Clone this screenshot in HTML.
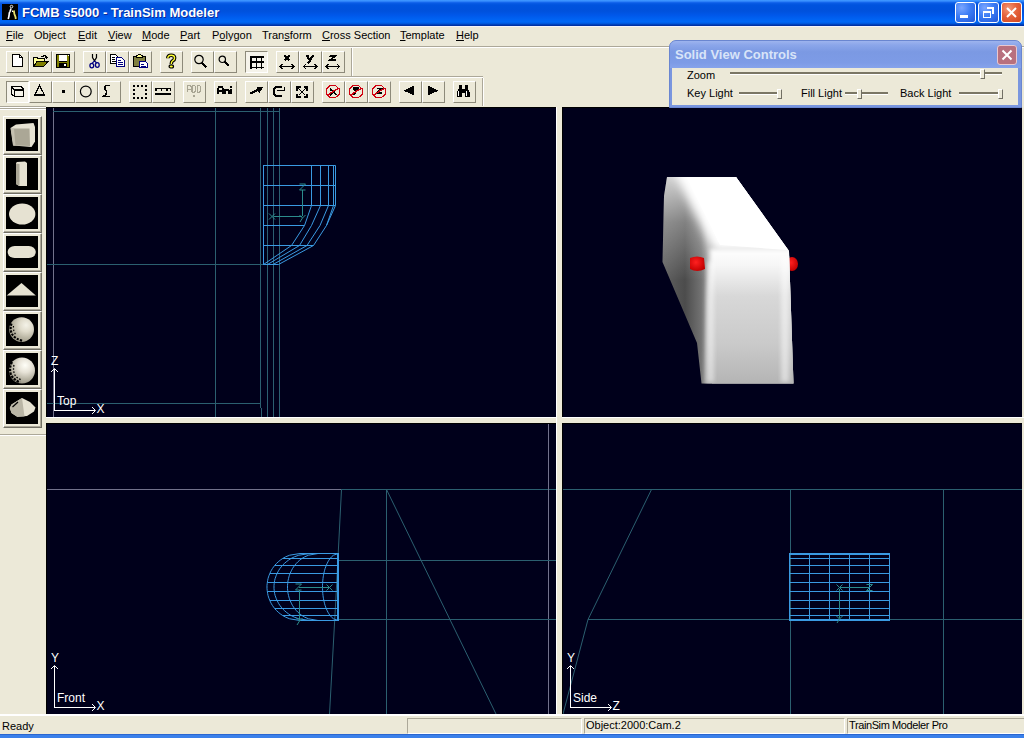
<!DOCTYPE html><html><head><meta charset="utf-8"><style>
*{margin:0;padding:0;box-sizing:border-box}
html,body{width:1024px;height:738px;overflow:hidden;background:#ECE9D8;font-family:"Liberation Sans",sans-serif;font-size:11px;color:#000;position:relative}
.a{position:absolute}
.t{white-space:nowrap}
.m{position:absolute;top:28px;line-height:14px;white-space:nowrap;font-size:11px}
.u{position:absolute;height:1px;background:#000}
.b{position:absolute;width:23px;height:22px;border-top:1px solid #fff;border-left:1px solid #fff;border-right:1px solid #8D8A7A;border-bottom:1px solid #8D8A7A}
.b:after{content:"";position:absolute;right:-1px;bottom:-1px;width:1px;height:1px}
.bp{position:absolute;width:23px;height:22px;border-top:1px solid #8D8A7A;border-left:1px solid #8D8A7A;border-right:1px solid #fff;border-bottom:1px solid #fff;background:#F5F3EA}
.ic{position:absolute;left:2px;top:2px;width:16px;height:16px;overflow:visible}
.vp{position:absolute;background:#00001B;overflow:hidden}
.vp svg{position:absolute;left:0;top:0}
.lbl{position:absolute;color:#fff;font-size:12px;white-space:nowrap;line-height:14px}
</style></head><body>
<div class="a" style="left:0;top:0;width:1024px;height:26px;background:linear-gradient(#3D95FF 0px,#3A92FF 1px,#1E70F2 2px,#0A5CE6 3px,#0053DE 5px,#0051DC 11px,#0057E9 15px,#0062F2 19px,#0068F6 22px,#0058DC 23.5px,#0038B0 25px,#002C98 26px)"></div>
<div class="a" style="left:0px;top:26px;width:1024px;height:1px;background:#F4F4FA;"></div>
<svg class="a" style="left:2px;top:4px" width="16" height="16" viewBox="0 0 16 16"><rect width="16" height="16" fill="#000"/><circle cx="9.5" cy="2.6" r="1.3" fill="none" stroke="#fff" stroke-width="0.9"/><path d="M9 4.5L8 7.5L7.3 9L7 12L6.2 15" fill="none" stroke="#fff" stroke-width="1.6"/><path d="M10.3 6.5L10.6 8" fill="none" stroke="#fff" stroke-width="1.2"/><path d="M11.8 6.5L12.4 10L13.5 13L13.8 15" fill="none" stroke="#E8E070" stroke-width="1.8"/></svg>
<div class="a t" style="left:22px;top:4px;font-size:13px;font-weight:bold;color:#fff;line-height:18px;text-shadow:1px 1px 0 #0A2A9C">FCMB s5000 - TrainSim Modeler</div>
<div class="a" style="left:955px;top:2px;width:21px;height:21px;border:1px solid #fff;border-radius:3px;background:radial-gradient(circle at 30% 25%,#7AA6FF 0%,#3D7DF5 45%,#2257D8 100%)"></div>
<div class="a" style="left:978px;top:2px;width:21px;height:21px;border:1px solid #fff;border-radius:3px;background:radial-gradient(circle at 30% 25%,#7AA6FF 0%,#3D7DF5 45%,#2257D8 100%)"></div>
<div class="a" style="left:1001px;top:2px;width:21px;height:21px;border:1px solid #fff;border-radius:3px;background:radial-gradient(circle at 35% 30%,#F39A7A 0%,#E5623C 45%,#D0451E 100%)"></div>
<div class="a" style="left:960px;top:15px;width:8px;height:3px;background:#fff;"></div>
<svg class="a" style="left:978px;top:2px" width="21" height="21" shape-rendering="crispEdges"><path d="M9 5h7v7h-2v-5h-5z" fill="#fff"/><rect x="5.5" y="9.5" width="7" height="6" fill="none" stroke="#fff" stroke-width="1"/><rect x="5" y="9" width="8" height="2" fill="#fff"/></svg>
<svg class="a" style="left:1001px;top:2px" width="21" height="21"><path d="M6 6L15 15M15 6L6 15" stroke="#fff" stroke-width="2"/></svg>
<div class="m" style="left:6px"><span style="text-decoration:underline;text-underline-offset:1px">F</span>ile</div>
<div class="m" style="left:34px">Object</div>
<div class="m" style="left:78px"><span style="text-decoration:underline;text-underline-offset:1px">E</span>dit</div>
<div class="m" style="left:108px"><span style="text-decoration:underline;text-underline-offset:1px">V</span>iew</div>
<div class="m" style="left:142px"><span style="text-decoration:underline;text-underline-offset:1px">M</span>ode</div>
<div class="m" style="left:180px"><span style="text-decoration:underline;text-underline-offset:1px">P</span>art</div>
<div class="m" style="left:212px">P<span style="text-decoration:underline;text-underline-offset:1px">o</span>lygon</div>
<div class="m" style="left:262px">Tran<span style="text-decoration:underline;text-underline-offset:1px">s</span>form</div>
<div class="m" style="left:322px"><span style="text-decoration:underline;text-underline-offset:1px">C</span>ross Section</div>
<div class="m" style="left:400px"><span style="text-decoration:underline;text-underline-offset:1px">T</span>emplate</div>
<div class="m" style="left:456px"><span style="text-decoration:underline;text-underline-offset:1px">H</span>elp</div>
<div class="a" style="left:0px;top:46px;width:1024px;height:1px;background:#ACA899;"></div>
<div class="a" style="left:0px;top:47px;width:1024px;height:1px;background:#fff;"></div>
<div class="a" style="left:351px;top:48px;width:1px;height:28px;background:#ACA899;"></div>
<div class="a" style="left:352px;top:48px;width:1px;height:28px;background:#fff;"></div>
<div class="a" style="left:0px;top:76px;width:483px;height:1px;background:#ACA899;"></div>
<div class="a" style="left:0px;top:77px;width:483px;height:1px;background:#fff;"></div>
<div class="a" style="left:482px;top:78px;width:1px;height:28px;background:#ACA899;"></div>
<div class="a" style="left:483px;top:78px;width:1px;height:28px;background:#fff;"></div>
<div class="a" style="left:0px;top:106px;width:46px;height:1px;background:#ACA899;"></div>
<div class="a" style="left:0px;top:107px;width:46px;height:1px;background:#fff;"></div>
<div class="a" style="left:0px;top:108px;width:46px;height:1px;background:#ACA899;"></div>
<div class="a" style="left:0px;top:109px;width:46px;height:1px;background:#fff;"></div>
<div class="b" style="left:6px;top:51px"><svg class="ic" viewBox="0 0 16 16" shape-rendering="crispEdges"><path d="M3.5 0.5H10.5L13.5 3.5V12.5H3.5Z" fill="#fff" stroke="#000" stroke-width="1" /><rect x="10" y="1" width="1" height="3" fill="#000"/><rect x="10" y="3" width="3" height="1" fill="#000"/></svg></div>
<div class="b" style="left:29px;top:51px"><svg class="ic" viewBox="0 0 16 16" shape-rendering="crispEdges"><path d="M1.5 12.5V3.5H5L6 4.5H12.5V7.8" fill="#FFFF99" stroke="#000" stroke-width="1.1" /><path d="M1.5 12.5L4.7 7.8H15.8L11.7 12.5Z" fill="#808000" stroke="#000" stroke-width="1.1" /><path d="M9.5 3.2Q12 0.5 14.8 2.8" fill="none" stroke="#000" stroke-width="1.2" /><path d="M12.8 2.8H16.8L14.8 5.2Z" fill="#000" /></svg></div>
<div class="b" style="left:52px;top:51px"><svg class="ic" viewBox="0 0 16 16" shape-rendering="crispEdges"><rect x="1" y="0" width="14" height="14" fill="#000"/><rect x="2" y="1" width="12" height="12" fill="#808000"/><rect x="4" y="1" width="8" height="6" fill="#fff"/><rect x="4" y="7" width="8" height="1" fill="#000"/><rect x="4" y="9" width="8" height="4" fill="#000"/><rect x="9" y="10" width="2" height="2" fill="#fff"/><rect x="13" y="1" width="1" height="1" fill="#fff"/><rect x="2" y="13" width="13" height="1" fill="#000"/></svg></div>
<div class="b" style="left:83px;top:51px"><svg class="ic" viewBox="0 0 16 16" shape-rendering="crispEdges"><g shape-rendering="geometricPrecision"><path d="M6.5 0V3.5L8.5 6.8L10.5 3.5V0" fill="none" stroke="#000" stroke-width="1.2" /><path d="M8.5 6.8L6.3 9.2M8.5 6.8L10.7 9" fill="none" stroke="#000080" stroke-width="1.2" /><ellipse cx="5.8" cy="11.6" rx="1.9" ry="2.3" fill="none" stroke="#000080" stroke-width="1.3"/><ellipse cx="11.3" cy="11" rx="1.9" ry="2.3" fill="none" stroke="#000080" stroke-width="1.3"/></g></svg></div>
<div class="b" style="left:106px;top:51px"><svg class="ic" viewBox="0 0 16 16" shape-rendering="crispEdges"><path d="M1.5 0.5H6.5L8.5 2.5V9.5H1.5Z" fill="#fff" stroke="#000" stroke-width="1" /><rect x="3" y="3" width="3" height="1" fill="#000"/><rect x="3" y="5" width="3" height="1" fill="#000"/><rect x="3" y="7" width="4" height="1" fill="#000"/><path d="M7.5 3.5H12.5L15.5 6.5V12.5H7.5Z" fill="#fff" stroke="#000080" stroke-width="1" /><rect x="9" y="6" width="3" height="1" fill="#000080"/><rect x="9" y="8" width="5" height="1" fill="#000080"/><rect x="9" y="10" width="5" height="1" fill="#000080"/></svg></div>
<div class="b" style="left:129px;top:51px"><svg class="ic" viewBox="0 0 16 16" shape-rendering="crispEdges"><path d="M1.5 2.5H13.5V12.5H1.5Z" fill="#808040" stroke="#000" stroke-width="1" /><path d="M5.5 1.5L6.5 0.5H8.5L9.5 1.5H10.5V3.5H4.5V1.5Z" fill="#FFFF90" stroke="#000" stroke-width="1" /><path d="M7.5 7.5H13.5L15.5 9.5V13.5H7.5Z" fill="#fff" stroke="#000080" stroke-width="1" /><rect x="9" y="10" width="3" height="1" fill="#000080"/><rect x="9" y="12" width="5" height="1" fill="#000080"/></svg></div>
<div class="b" style="left:160px;top:51px"><svg class="ic" viewBox="0 0 16 16" shape-rendering="crispEdges"><g shape-rendering="geometricPrecision"><path d="M4.8 4.2Q4.8 1.3 8.2 1.3Q11.6 1.3 11.6 4Q11.6 5.9 9.6 6.9Q8.3 7.6 8.3 10" fill="none" stroke="#000" stroke-width="3.6" /><path d="M4.8 4.2Q4.8 1.3 8.2 1.3Q11.6 1.3 11.6 4Q11.6 5.9 9.6 6.9Q8.3 7.6 8.3 10" fill="none" stroke="#FFFF30" stroke-width="1.4" /><ellipse cx="8.3" cy="12.4" rx="2.2" ry="1.6" fill="#FFFF30" stroke="#000" stroke-width="1.2"/></g></svg></div>
<div class="b" style="left:191px;top:51px"><svg class="ic" viewBox="0 0 16 16" shape-rendering="crispEdges"><circle shape-rendering="geometricPrecision" cx="5" cy="5.5" r="4.2" fill="none" stroke="#000" stroke-width="1.2"/><path d="M8 9L12.5 13.5" fill="none" stroke="#000" stroke-width="2.2" /></svg></div>
<div class="b" style="left:214px;top:51px"><svg class="ic" viewBox="0 0 16 16" shape-rendering="crispEdges"><circle shape-rendering="geometricPrecision" cx="5.3" cy="5.3" r="3.2" fill="none" stroke="#000" stroke-width="1.2"/><path d="M7.5 7.5L12 12" fill="none" stroke="#000" stroke-width="2" /></svg></div>
<div class="bp" style="left:245px;top:51px"><svg class="ic" viewBox="0 0 16 16" shape-rendering="crispEdges"><rect x="2" y="2.2" width="14" height="1.7" fill="#000"/><rect x="2" y="7.4" width="14" height="1.7" fill="#000"/><rect x="2" y="12.6" width="14" height="1.7" fill="#000"/><rect x="2.2" y="2" width="1.7" height="13" fill="#000"/><rect x="7.7" y="2" width="1.7" height="13" fill="#000"/><rect x="12.6" y="2" width="1.7" height="13" fill="#000"/></svg></div>
<div class="b" style="left:276px;top:51px"><svg class="ic" viewBox="0 0 16 16" shape-rendering="crispEdges"><path d="M5.5 1.5L10.5 6.5M10.5 1.5L5.5 6.5" fill="none" stroke="#000" stroke-width="2.2" /><path d="M1 12.5H15" fill="none" stroke="#000" stroke-width="1.2" /><path d="M3.5 10.2L1.3 12.5L3.5 14.8M12.5 10.2L14.7 12.5L12.5 14.8" fill="none" stroke="#000" stroke-width="1.2" /></svg></div>
<div class="b" style="left:299px;top:51px"><svg class="ic" viewBox="0 0 16 16" shape-rendering="crispEdges"><path d="M4.5 1.5L8 6.5M11 1.5L8 6.5L5.5 9.5" fill="none" stroke="#000" stroke-width="2.2" /><rect x="4" y="1" width="2.5" height="1.5" fill="#000"/><rect x="9.5" y="1" width="2.5" height="1.5" fill="#000"/><path d="M1.2 12.5H15" fill="none" stroke="#000" stroke-width="1.2" /><path d="M3.7 10.2L1.5 12.5L3.7 14.8M12.5 10.2L14.7 12.5L12.5 14.8" fill="none" stroke="#000" stroke-width="1.2" /></svg></div>
<div class="b" style="left:322px;top:51px"><svg class="ic" viewBox="0 0 16 16" shape-rendering="crispEdges"><path d="M5 2H10L5.2 6H10.5" fill="none" stroke="#000" stroke-width="1.8" /><rect x="4" y="1.5" width="1.3" height="1.5" fill="#000"/><path d="M1 12.5H14.7" fill="none" stroke="#000" stroke-width="1.2" /><path d="M3.5 10.2L1.3 12.5L3.5 14.8M12.2 10.2L14.399999999999999 12.5L12.2 14.8" fill="none" stroke="#000" stroke-width="1.2" /></svg></div>
<div class="bp" style="left:6px;top:81px"><svg class="ic" viewBox="0 0 16 16" shape-rendering="crispEdges"><path d="M2.5 2.5H11.8L14.5 5.3M2.5 2.5V9.8L5.3 12.3M2.5 2.5L5.3 5.5" fill="none" stroke="#000" stroke-width="1.3" /><path d="M5.5 5.8H14.5V12.5H5.5Z" fill="none" stroke="#000" stroke-width="1.3" /><rect x="5" y="5" width="10" height="1.5" fill="#000"/></svg></div>
<div class="b" style="left:29px;top:81px"><svg class="ic" viewBox="0 0 16 16" shape-rendering="crispEdges"><path d="M2.8 11L7.5 1.5L12.5 11Z" fill="none" stroke="#000" stroke-width="1.2" /><rect x="2" y="10.6" width="11" height="1.4" fill="#000"/></svg></div>
<div class="b" style="left:52px;top:81px"><svg class="ic" viewBox="0 0 16 16" shape-rendering="crispEdges"><rect x="7" y="6" width="3" height="3" fill="#000"/></svg></div>
<div class="b" style="left:75px;top:81px"><svg class="ic" viewBox="0 0 16 16" shape-rendering="crispEdges"><circle cx="7.8" cy="7.5" r="5.4" fill="none" stroke="#000" stroke-width="1.2" shape-rendering="geometricPrecision"/></svg></div>
<div class="b" style="left:98px;top:81px"><svg class="ic" viewBox="0 0 16 16" shape-rendering="crispEdges"><path d="M8.7 1.5H5.5Q3.5 2.5 3.8 4.5Q4.5 6.5 5.8 8Q5.5 10.5 2.5 12.5H8.7" fill="none" stroke="#000" stroke-width="1.5" /></svg></div>
<div class="b" style="left:129px;top:81px"><svg class="ic" viewBox="0 0 16 16" shape-rendering="crispEdges"><rect x="1" y="1" width="2" height="2" fill="#000"/><rect x="5" y="1" width="2" height="2" fill="#000"/><rect x="9" y="1" width="2" height="2" fill="#000"/><rect x="13" y="1" width="2" height="2" fill="#000"/><rect x="1" y="5" width="2" height="2" fill="#000"/><rect x="13" y="5" width="2" height="2" fill="#000"/><rect x="1" y="9" width="2" height="2" fill="#000"/><rect x="13" y="9" width="2" height="2" fill="#000"/><rect x="1" y="13" width="2" height="2" fill="#000"/><rect x="5" y="13" width="2" height="2" fill="#000"/><rect x="9" y="13" width="2" height="2" fill="#000"/><rect x="13" y="13" width="2" height="2" fill="#000"/></svg></div>
<div class="b" style="left:152px;top:81px"><svg class="ic" viewBox="0 0 16 16" shape-rendering="crispEdges"><rect x="0" y="4" width="16" height="1.4" fill="#000"/><rect x="0" y="5.4" width="1.5" height="1.4" fill="#000"/><rect x="5.6" y="5.4" width="1.4" height="1.2" fill="#000"/><rect x="11.2" y="5.4" width="1.4" height="1.2" fill="#000"/><rect x="14.6" y="5.4" width="1.4" height="1.4" fill="#000"/><rect x="0" y="9.2" width="16" height="1.3" fill="#000"/></svg></div>
<div class="b" style="left:183px;top:81px"><svg class="ic" viewBox="0 0 16 16" shape-rendering="crispEdges"><path d="M1 8V2.5L2 1.5H4L5 2.5V8M1 5H5M6 1.5H8.5L9.5 2.5V7L8.5 8H6ZM11 1.5H13.5L14.5 2.5V7L13.5 8H11Z" fill="none" stroke="#A8A593" stroke-width="1" /><rect x="7" y="11" width="2" height="2" fill="#A8A593"/></svg></div>
<div class="b" style="left:214px;top:81px"><svg class="ic" viewBox="0 0 16 16" shape-rendering="crispEdges"><path d="M1 10V4.5L2.5 2.8H4.5L6 4.5V10M1 7H6" fill="none" stroke="#000" stroke-width="2" /><path d="M8 10V5.5H10.5L11.5 6.5V10" fill="none" stroke="#000" stroke-width="2" /><rect x="13" y="5" width="2" height="5" fill="#000"/><rect x="13" y="2.2" width="2" height="2" fill="#000"/></svg></div>
<div class="b" style="left:245px;top:81px"><svg class="ic" viewBox="0 0 16 16" shape-rendering="crispEdges"><path d="M2.5 9.5L12.5 4.5" fill="none" stroke="#000" stroke-width="2.2" /><path d="M8.5 4H13.5L10.8 8.5" fill="none" stroke="#000" stroke-width="1.8" /></svg></div>
<div class="b" style="left:268px;top:81px"><svg class="ic" viewBox="0 0 16 16" shape-rendering="crispEdges"><path d="M11 2.8H5.5L3 5.3V10L5.5 12H11" fill="none" stroke="#000" stroke-width="2.2" /><path d="M6 6.5H13.5V3" fill="none" stroke="#000" stroke-width="1.6" /></svg></div>
<div class="b" style="left:291px;top:81px"><svg class="ic" viewBox="0 0 16 16" shape-rendering="crispEdges"><path d="M4.5 4.5L11.5 11.5M11.5 4.5L4.5 11.5" fill="none" stroke="#000" stroke-width="1.3" /><path d="M3 6.5V3H6.5M9.5 3H13V6.5M13 9.5V13H9.5M6.5 13H3V9.5" fill="none" stroke="#000" stroke-width="1.6" /></svg></div>
<div class="b" style="left:322px;top:81px"><svg class="ic" viewBox="0 0 16 16" shape-rendering="crispEdges"><path d="M5 1.5H10.5L14.5 5.3V10L10.5 13.5H5L1.5 10V5.3Z" fill="none" stroke="#D00010" stroke-width="1.2"/><path d="M5 5L11.5 11M11.5 5L5 11" fill="none" stroke="#000" stroke-width="1.6" /><path d="M2.8 10.8L13.5 4.2" fill="none" stroke="#D00010" stroke-width="1.4" /></svg></div>
<div class="b" style="left:345px;top:81px"><svg class="ic" viewBox="0 0 16 16" shape-rendering="crispEdges"><path d="M5 1.5H10.5L14.5 5.3V10L10.5 13.5H5L1.5 10V5.3Z" fill="none" stroke="#D00010" stroke-width="1.2"/><path d="M5 3.5L8 7M11 3.5L8 7L6 11" fill="none" stroke="#000" stroke-width="2" /><rect x="6" y="2.5" width="4.5" height="2" fill="#000"/><path d="M2.8 10.8L13.5 4.2" fill="none" stroke="#D00010" stroke-width="1.4" /></svg></div>
<div class="b" style="left:368px;top:81px"><svg class="ic" viewBox="0 0 16 16" shape-rendering="crispEdges"><path d="M5 1.5H10.5L14.5 5.3V10L10.5 13.5H5L1.5 10V5.3Z" fill="none" stroke="#D00010" stroke-width="1.2"/><path d="M6 4.5H10.5L6 9.2H10.8" fill="none" stroke="#000" stroke-width="1.7" /><path d="M2.8 10.8L13.5 4.2" fill="none" stroke="#D00010" stroke-width="1.4" /></svg></div>
<div class="b" style="left:399px;top:81px"><svg class="ic" viewBox="0 0 16 16" shape-rendering="crispEdges"><path d="M1.8 6.7L12 1.7V11.6Z" fill="#000" /></svg></div>
<div class="b" style="left:422px;top:81px"><svg class="ic" viewBox="0 0 16 16" shape-rendering="crispEdges"><path d="M3 1.7L13.2 6.7L3 11.6Z" fill="#000" /></svg></div>
<div class="b" style="left:453px;top:81px"><svg class="ic" viewBox="0 0 16 16" shape-rendering="crispEdges"><path d="M2.5 1H5.5V5H8.5V1H11.5V4.5L13.8 8V12.8H9V9H5.5V12.8H1V8L2.5 4.5Z" fill="#000" /><rect x="2.3" y="7" width="1" height="4.5" fill="#fff"/><rect x="9.6" y="7" width="1" height="4.5" fill="#fff"/><rect x="5.5" y="5" width="3" height="1.5" fill="#000"/></svg></div>
<div class="vp" style="left:46px;top:107px;width:510px;height:310px"><svg width="510" height="310" viewBox="46 107 510 310"><line x1="53.5" y1="107" x2="53.5" y2="417" stroke="#72728C" stroke-width="1"/><line x1="53" y1="111.5" x2="280" y2="111.5" stroke="#2B5F70" stroke-width="1"/><line x1="215.5" y1="107" x2="215.5" y2="417" stroke="#2B5F70" stroke-width="1"/><line x1="267.5" y1="107" x2="267.5" y2="417" stroke="#2B5F70" stroke-width="1"/><line x1="273.5" y1="107" x2="273.5" y2="417" stroke="#2B5F70" stroke-width="1"/><line x1="279.5" y1="107" x2="279.5" y2="417" stroke="#2B5F70" stroke-width="1"/><line x1="260.5" y1="107" x2="260.5" y2="408" stroke="#2B5F70" stroke-width="1"/><line x1="261.5" y1="408" x2="261.5" y2="417" stroke="#2B5F70" stroke-width="1"/><line x1="46" y1="264.5" x2="263" y2="264.5" stroke="#2B5F70" stroke-width="1"/><line x1="46" y1="403.5" x2="260" y2="403.5" stroke="#2B5F70" stroke-width="1"/><line x1="263.5" y1="165.5" x2="335.5" y2="165.5" stroke="#3A9AE2" stroke-width="1"/><line x1="263.5" y1="185.5" x2="335.5" y2="185.5" stroke="#3A9AE2" stroke-width="1"/><line x1="263.5" y1="205.5" x2="335.5" y2="205.5" stroke="#3A9AE2" stroke-width="1"/><line x1="263.5" y1="165" x2="263.5" y2="265" stroke="#3A9AE2" stroke-width="1"/><line x1="311.5" y1="165.5" x2="311.5" y2="205.5" stroke="#3A9AE2" stroke-width="1"/><line x1="320.5" y1="165.5" x2="320.5" y2="205.5" stroke="#3A9AE2" stroke-width="1"/><line x1="328.5" y1="165.5" x2="328.5" y2="205.5" stroke="#3A9AE2" stroke-width="1"/><line x1="333.5" y1="165.5" x2="333.5" y2="205.5" stroke="#3A9AE2" stroke-width="1"/><line x1="335.5" y1="165.5" x2="335.5" y2="205.5" stroke="#3A9AE2" stroke-width="1"/><polyline points="311.5,205.5 304.5,225.5 291.5,245.5 263.5,264.5" fill="none" stroke="#3A9AE2" stroke-width="1"/><polyline points="320.5,205.5 311.5,225.5 299.5,245.5 267.5,264.5" fill="none" stroke="#3A9AE2" stroke-width="1"/><polyline points="328.5,205.5 320,225.5 307,245.5 273,264.5" fill="none" stroke="#3A9AE2" stroke-width="1"/><polyline points="335.5,205.5 326.5,225.5 313.5,245.5 278.5,264.5" fill="none" stroke="#3A9AE2" stroke-width="1"/><line x1="263.5" y1="225.5" x2="304.5" y2="225.5" stroke="#3A9AE2" stroke-width="1"/><line x1="263.5" y1="245.5" x2="313.5" y2="245.5" stroke="#3A9AE2" stroke-width="1"/><line x1="263.5" y1="264.5" x2="278.5" y2="264.5" stroke="#3A9AE2" stroke-width="1"/><line x1="333.5" y1="205.5" x2="326.5" y2="225.5" stroke="#3A9AE2" stroke-width="1"/><line x1="302.5" y1="190" x2="302.5" y2="216" stroke="#2C8C8C" stroke-width="1"/><line x1="274" y1="216.5" x2="302" y2="216.5" stroke="#2C8C8C" stroke-width="1"/><path d="M299.5 184H305.5L299.5 190H305.5" fill="none" stroke="#2C8C8C" stroke-width="1"/><path d="M269 213.5L275 219.5M275 213.5L269 219.5" fill="none" stroke="#2C8C8C" stroke-width="1"/><path d="M299.5 215L302.5 218L305.5 215M302.5 218L300.0 222" fill="none" stroke="#2C8C8C" stroke-width="1"/><line x1="54.5" y1="369" x2="54.5" y2="411" stroke="#fff" stroke-width="1"/><line x1="54" y1="410.5" x2="95" y2="410.5" stroke="#fff" stroke-width="1"/><path d="M51 372L54.5 368.5L58 372" fill="none" stroke="#fff" stroke-width="1"/><path d="M92 407L95.5 410.5L92 414" fill="none" stroke="#fff" stroke-width="1"/><text x="51" y="365" font-family="Liberation Sans" font-size="12" fill="#fff">Z</text><text x="57" y="405" font-family="Liberation Sans" font-size="12" fill="#fff">Top</text><text x="96.5" y="413" font-family="Liberation Sans" font-size="12" fill="#fff">X</text></svg></div>
<div class="vp" style="left:562px;top:107px;width:460px;height:310px"><svg width="460" height="310" viewBox="562 107 460 310"><defs>
<clipPath id="sil"><path d="M667 177L736 177L789 251L793.5 383.5L701.5 383.5L697 343L662.5 262L664 196Z"/></clipPath>
<clipPath id="frt"><path d="M704 249L800 249L800 390L700 390Z"/></clipPath>
<filter id="bl" x="-30%" y="-30%" width="160%" height="160%"><feGaussianBlur stdDeviation="3"/></filter>
<filter id="bl1" x="-30%" y="-30%" width="160%" height="160%"><feGaussianBlur stdDeviation="2"/></filter>
<filter id="bl2" x="-30%" y="-30%" width="160%" height="160%"><feGaussianBlur stdDeviation="5"/></filter>
<linearGradient id="gf" x1="0" y1="249" x2="0" y2="384" gradientUnits="userSpaceOnUse"><stop offset="0" stop-color="#FFFFFF"/><stop offset="0.12" stop-color="#F6F6F6"/><stop offset="0.35" stop-color="#D8D8D8"/><stop offset="0.7" stop-color="#CACACA"/><stop offset="1" stop-color="#B4B4B4"/></linearGradient>
<linearGradient id="gl" x1="662" y1="0" x2="708" y2="0" gradientUnits="userSpaceOnUse"><stop offset="0" stop-color="#626262"/><stop offset="0.5" stop-color="#4C4C4C"/><stop offset="0.85" stop-color="#727272"/><stop offset="1" stop-color="#A0A0A0"/></linearGradient>
<linearGradient id="glv" x1="0" y1="175" x2="0" y2="280" gradientUnits="userSpaceOnUse"><stop offset="0" stop-color="#fff" stop-opacity="0.75"/><stop offset="0.45" stop-color="#fff" stop-opacity="0.3"/><stop offset="1" stop-color="#fff" stop-opacity="0"/></linearGradient>
<radialGradient id="rd" cx="0.4" cy="0.4" r="0.65"><stop offset="0" stop-color="#FF2020"/><stop offset="1" stop-color="#C00000"/></radialGradient>
</defs><ellipse cx="792" cy="264" rx="6" ry="7" fill="url(#rd)"/><g clip-path="url(#sil)"><rect x="650" y="170" width="160" height="220" fill="url(#gl)"/><rect x="650" y="170" width="160" height="220" fill="url(#glv)"/><path d="M672 168L750 168L805 251L714 251Z" fill="#FFFFFF" filter="url(#bl2)"/><path d="M684 172L745 172L800 251L720 245Z" fill="#FFFFFF"/><path d="M710 249L800 249L800 390L705 390L707 300Z" fill="url(#gf)" filter="url(#bl1)"/><path d="M714 256L800 256L800 390L712 390L712 300Z" fill="url(#gf)"/><rect x="707" y="262" width="7" height="120" fill="#FFFFFF" filter="url(#bl1)" opacity="0.45"/><rect x="781" y="256" width="8" height="126" fill="#FFFFFF" filter="url(#bl1)" opacity="0.5"/></g><path d="M690 258Q697 255 704 258L705 269Q697 273 690 269Z" fill="url(#rd)"/></svg></div>
<div class="vp" style="left:46px;top:423px;width:510px;height:291px"><svg width="510" height="291" viewBox="46 423 510 291"><line x1="46" y1="489.5" x2="341" y2="489.5" stroke="#72728C" stroke-width="1"/><line x1="341" y1="489.5" x2="556" y2="489.5" stroke="#2B5F70" stroke-width="1"/><line x1="548.5" y1="423" x2="548.5" y2="714" stroke="#72728C" stroke-width="1"/><path d="M341.5 489.5Q336 600 329.5 714" fill="none" stroke="#2B5F70" stroke-width="1"/><line x1="386.5" y1="489" x2="386.5" y2="714" stroke="#2B5F70" stroke-width="1"/><line x1="386.5" y1="489.5" x2="496" y2="714" stroke="#2B5F70" stroke-width="1"/><line x1="338" y1="560.5" x2="556" y2="560.5" stroke="#2B5F70" stroke-width="1"/><line x1="338" y1="619.5" x2="556" y2="619.5" stroke="#2B5F70" stroke-width="1"/><line x1="300.0" y1="553.5" x2="338.5" y2="553.5" stroke="#3A9AE2" stroke-width="1"/><line x1="282.65597144970906" y1="558.5" x2="338.5" y2="558.5" stroke="#3A9AE2" stroke-width="1"/><line x1="274.69297462113735" y1="565.5" x2="338.5" y2="565.5" stroke="#3A9AE2" stroke-width="1"/><line x1="269.79818384161524" y1="573.5" x2="338.5" y2="573.5" stroke="#3A9AE2" stroke-width="1"/><line x1="267.2990830925953" y1="582.5" x2="338.5" y2="582.5" stroke="#3A9AE2" stroke-width="1"/><line x1="267.2990830925953" y1="591.5" x2="338.5" y2="591.5" stroke="#3A9AE2" stroke-width="1"/><line x1="269.79818384161524" y1="600.5" x2="338.5" y2="600.5" stroke="#3A9AE2" stroke-width="1"/><line x1="274.69297462113735" y1="608.5" x2="338.5" y2="608.5" stroke="#3A9AE2" stroke-width="1"/><line x1="282.65597144970906" y1="615.5" x2="338.5" y2="615.5" stroke="#3A9AE2" stroke-width="1"/><line x1="300.0" y1="620.5" x2="338.5" y2="620.5" stroke="#3A9AE2" stroke-width="1"/><line x1="338.5" y1="553" x2="338.5" y2="621" stroke="#3A9AE2" stroke-width="1"/><line x1="337.5" y1="553" x2="337.5" y2="621" stroke="#3A9AE2" stroke-width="1"/><polyline points="300.0,553.5 289.7,555.175 285.6,556.85 282.6,558.525 280.2,560.2 278.2,561.875 276.4,563.55 274.9,565.225 273.6,566.9 272.4,568.575 271.4,570.25 270.5,571.925 269.8,573.6 269.1,575.275 268.5,576.95 268.0,578.625 267.7,580.3 267.4,581.975 267.2,583.65 267.0,585.325 267.0,587.0 267.0,588.675 267.2,590.35 267.4,592.025 267.7,593.7 268.0,595.375 268.5,597.05 269.1,598.725 269.8,600.4 270.5,602.075 271.4,603.75 272.4,605.425 273.6,607.1 274.9,608.775 276.4,610.45 278.2,612.125 280.2,613.8 282.6,615.475 285.6,617.15 289.7,618.825 300.0,620.5" fill="none" stroke="#3A9AE2" stroke-width="1"/><polyline points="310.0,553.5 298.8,555.175 294.3,556.85 291.0,558.525 288.4,560.2 286.2,561.875 284.3,563.55 282.6,565.225 281.2,566.9 279.9,568.575 278.8,570.25 277.9,571.925 277.0,573.6 276.3,575.275 275.7,576.95 275.1,578.625 274.7,580.3 274.4,581.975 274.2,583.65 274.0,585.325 274.0,587.0 274.0,588.675 274.2,590.35 274.4,592.025 274.7,593.7 275.1,595.375 275.7,597.05 276.3,598.725 277.0,600.4 277.9,602.075 278.8,603.75 279.9,605.425 281.2,607.1 282.6,608.775 284.3,610.45 286.2,612.125 288.4,613.8 291.0,615.475 294.3,617.15 298.8,618.825 310.0,620.5" fill="none" stroke="#3A9AE2" stroke-width="1"/><polyline points="318.0,553.5 308.5,555.175 304.7,556.85 301.9,558.525 299.7,560.2 297.8,561.875 296.2,563.55 294.8,565.225 293.6,566.9 292.5,568.575 291.6,570.25 290.8,571.925 290.0,573.6 289.4,575.275 288.9,576.95 288.5,578.625 288.1,580.3 287.8,581.975 287.7,583.65 287.5,585.325 287.5,587.0 287.5,588.675 287.7,590.35 287.8,592.025 288.1,593.7 288.5,595.375 288.9,597.05 289.4,598.725 290.0,600.4 290.8,602.075 291.6,603.75 292.5,605.425 293.6,607.1 294.8,608.775 296.2,610.45 297.8,612.125 299.7,613.8 301.9,615.475 304.7,617.15 308.5,618.825 318.0,620.5" fill="none" stroke="#3A9AE2" stroke-width="1"/><polyline points="338.5,553.5 333.5,555.175 331.5,556.85 330.1,558.525 328.9,560.2 327.9,561.875 327.1,563.55 326.3,565.225 325.7,566.9 325.1,568.575 324.6,570.25 324.2,571.925 323.8,573.6 323.5,575.275 323.2,576.95 323.0,578.625 322.8,580.3 322.7,581.975 322.6,583.65 322.5,585.325 322.5,587.0 322.5,588.675 322.6,590.35 322.7,592.025 322.8,593.7 323.0,595.375 323.2,597.05 323.5,598.725 323.8,600.4 324.2,602.075 324.6,603.75 325.1,605.425 325.7,607.1 326.3,608.775 327.1,610.45 327.9,612.125 328.9,613.8 330.1,615.475 331.5,617.15 333.5,618.825 338.5,620.5" fill="none" stroke="#3A9AE2" stroke-width="1"/><line x1="299" y1="587.5" x2="329" y2="587.5" stroke="#2C8C8C" stroke-width="1"/><line x1="299.5" y1="590" x2="299.5" y2="621" stroke="#2C8C8C" stroke-width="1"/><path d="M295.5 584H301.5L295.5 590H301.5" fill="none" stroke="#2C8C8C" stroke-width="1"/><path d="M326.5 584.5L332.5 590.5M332.5 584.5L326.5 590.5" fill="none" stroke="#2C8C8C" stroke-width="1"/><path d="M296.5 618L299.5 621L302.5 618M299.5 621L297.0 625" fill="none" stroke="#2C8C8C" stroke-width="1"/><line x1="54.5" y1="666" x2="54.5" y2="708" stroke="#fff" stroke-width="1"/><line x1="54" y1="707.5" x2="95" y2="707.5" stroke="#fff" stroke-width="1"/><path d="M51 669L54.5 665.5L58 669" fill="none" stroke="#fff" stroke-width="1"/><path d="M92 704L95.5 707.5L92 711" fill="none" stroke="#fff" stroke-width="1"/><text x="51" y="662" font-family="Liberation Sans" font-size="12" fill="#fff">Y</text><text x="57" y="702" font-family="Liberation Sans" font-size="12" fill="#fff">Front</text><text x="96.5" y="710" font-family="Liberation Sans" font-size="12" fill="#fff">X</text></svg></div>
<div class="vp" style="left:562px;top:423px;width:460px;height:291px"><svg width="460" height="291" viewBox="562 423 460 291"><line x1="562" y1="489.5" x2="1022" y2="489.5" stroke="#2B5F70" stroke-width="1"/><line x1="651.5" y1="489.5" x2="588" y2="619.5" stroke="#2B5F70" stroke-width="1"/><line x1="588" y1="619.5" x2="563" y2="714" stroke="#2B5F70" stroke-width="1"/><line x1="588" y1="619.5" x2="1022" y2="619.5" stroke="#2B5F70" stroke-width="1"/><line x1="790.5" y1="489" x2="790.5" y2="714" stroke="#2B5F70" stroke-width="1"/><line x1="943.5" y1="489" x2="943.5" y2="714" stroke="#2B5F70" stroke-width="1"/><line x1="789.5" y1="553.5" x2="889.5" y2="553.5" stroke="#3A9AE2" stroke-width="1"/><line x1="789.5" y1="558.5" x2="889.5" y2="558.5" stroke="#3A9AE2" stroke-width="1"/><line x1="789.5" y1="565.5" x2="889.5" y2="565.5" stroke="#3A9AE2" stroke-width="1"/><line x1="789.5" y1="573.5" x2="889.5" y2="573.5" stroke="#3A9AE2" stroke-width="1"/><line x1="789.5" y1="582.5" x2="889.5" y2="582.5" stroke="#3A9AE2" stroke-width="1"/><line x1="789.5" y1="591.5" x2="889.5" y2="591.5" stroke="#3A9AE2" stroke-width="1"/><line x1="789.5" y1="600.5" x2="889.5" y2="600.5" stroke="#3A9AE2" stroke-width="1"/><line x1="789.5" y1="608.5" x2="889.5" y2="608.5" stroke="#3A9AE2" stroke-width="1"/><line x1="789.5" y1="615.5" x2="889.5" y2="615.5" stroke="#3A9AE2" stroke-width="1"/><line x1="789.5" y1="619.5" x2="889.5" y2="619.5" stroke="#3A9AE2" stroke-width="1"/><line x1="789.5" y1="554.5" x2="889.5" y2="554.5" stroke="#3A9AE2" stroke-width="1"/><line x1="789.5" y1="620.5" x2="889.5" y2="620.5" stroke="#3A9AE2" stroke-width="1"/><line x1="789.5" y1="553" x2="789.5" y2="621" stroke="#3A9AE2" stroke-width="1"/><line x1="809.5" y1="553" x2="809.5" y2="621" stroke="#3A9AE2" stroke-width="1"/><line x1="829.5" y1="553" x2="829.5" y2="621" stroke="#3A9AE2" stroke-width="1"/><line x1="849.5" y1="553" x2="849.5" y2="621" stroke="#3A9AE2" stroke-width="1"/><line x1="869.5" y1="553" x2="869.5" y2="621" stroke="#3A9AE2" stroke-width="1"/><line x1="889.5" y1="553" x2="889.5" y2="621" stroke="#3A9AE2" stroke-width="1"/><line x1="840" y1="587.5" x2="869" y2="587.5" stroke="#2C8C8C" stroke-width="1"/><line x1="839.5" y1="589" x2="839.5" y2="618" stroke="#2C8C8C" stroke-width="1"/><path d="M836.5 584.5L842.5 590.5M842.5 584.5L836.5 590.5" fill="none" stroke="#2C8C8C" stroke-width="1"/><path d="M866.5 584.5H872.5L866.5 590.5H872.5" fill="none" stroke="#2C8C8C" stroke-width="1"/><path d="M836.5 616L839.5 619L842.5 616M839.5 619L837.0 623" fill="none" stroke="#2C8C8C" stroke-width="1"/><line x1="570.5" y1="666" x2="570.5" y2="708" stroke="#fff" stroke-width="1"/><line x1="570" y1="707.5" x2="611" y2="707.5" stroke="#fff" stroke-width="1"/><path d="M567 669L570.5 665.5L574 669" fill="none" stroke="#fff" stroke-width="1"/><path d="M608 704L611.5 707.5L608 711" fill="none" stroke="#fff" stroke-width="1"/><text x="567" y="662" font-family="Liberation Sans" font-size="12" fill="#fff">Y</text><text x="573" y="702" font-family="Liberation Sans" font-size="12" fill="#fff">Side</text><text x="612.5" y="710" font-family="Liberation Sans" font-size="12" fill="#fff">Z</text></svg></div>
<div class="a" style="left:46px;top:417px;width:510px;height:1px;background:#fff;"></div>
<div class="a" style="left:562px;top:417px;width:462px;height:1px;background:#fff;"></div>
<div class="a" style="left:556px;top:107px;width:1px;height:607px;background:#fff;"></div>
<div class="a" style="left:46px;top:107px;width:510px;height:1px;background:#000;"></div>
<div class="a" style="left:46px;top:107px;width:1px;height:310px;background:#000;"></div>
<div class="a" style="left:562px;top:107px;width:460px;height:1px;background:#000;"></div>
<div class="a" style="left:562px;top:107px;width:1px;height:310px;background:#000;"></div>
<div class="a" style="left:46px;top:423px;width:510px;height:1px;background:#000;"></div>
<div class="a" style="left:46px;top:423px;width:1px;height:291px;background:#000;"></div>
<div class="a" style="left:562px;top:423px;width:460px;height:1px;background:#000;"></div>
<div class="a" style="left:562px;top:423px;width:1px;height:291px;background:#000;"></div>
<div class="a" style="left:0px;top:434px;width:46px;height:1px;background:#ACA899;"></div>
<div class="a" style="left:0px;top:435px;width:46px;height:1px;background:#fff;"></div>
<div class="a" style="left:3px;top:116px;width:39px;height:39px;border-top:1px solid #fff;border-left:1px solid #fff;border-right:1px solid #716F64;border-bottom:1px solid #716F64;box-shadow:inset -1px -1px 0 #ACA899"></div>
<div class="a" style="left:6px;top:119px;width:32px;height:32px;background:#000;"></div>
<div class="a" style="left:3px;top:155px;width:39px;height:39px;border-top:1px solid #fff;border-left:1px solid #fff;border-right:1px solid #716F64;border-bottom:1px solid #716F64;box-shadow:inset -1px -1px 0 #ACA899"></div>
<div class="a" style="left:6px;top:158px;width:32px;height:32px;background:#000;"></div>
<div class="a" style="left:3px;top:194px;width:39px;height:39px;border-top:1px solid #fff;border-left:1px solid #fff;border-right:1px solid #716F64;border-bottom:1px solid #716F64;box-shadow:inset -1px -1px 0 #ACA899"></div>
<div class="a" style="left:6px;top:197px;width:32px;height:32px;background:#000;"></div>
<div class="a" style="left:3px;top:233px;width:39px;height:39px;border-top:1px solid #fff;border-left:1px solid #fff;border-right:1px solid #716F64;border-bottom:1px solid #716F64;box-shadow:inset -1px -1px 0 #ACA899"></div>
<div class="a" style="left:6px;top:236px;width:32px;height:32px;background:#000;"></div>
<div class="a" style="left:3px;top:272px;width:39px;height:39px;border-top:1px solid #fff;border-left:1px solid #fff;border-right:1px solid #716F64;border-bottom:1px solid #716F64;box-shadow:inset -1px -1px 0 #ACA899"></div>
<div class="a" style="left:6px;top:275px;width:32px;height:32px;background:#000;"></div>
<div class="a" style="left:3px;top:311px;width:39px;height:39px;border-top:1px solid #fff;border-left:1px solid #fff;border-right:1px solid #716F64;border-bottom:1px solid #716F64;box-shadow:inset -1px -1px 0 #ACA899"></div>
<div class="a" style="left:6px;top:314px;width:32px;height:32px;background:#000;"></div>
<div class="a" style="left:3px;top:350px;width:39px;height:39px;border-top:1px solid #fff;border-left:1px solid #fff;border-right:1px solid #716F64;border-bottom:1px solid #716F64;box-shadow:inset -1px -1px 0 #ACA899"></div>
<div class="a" style="left:6px;top:353px;width:32px;height:32px;background:#000;"></div>
<div class="a" style="left:3px;top:389px;width:39px;height:39px;border-top:1px solid #fff;border-left:1px solid #fff;border-right:1px solid #716F64;border-bottom:1px solid #716F64;box-shadow:inset -1px -1px 0 #ACA899"></div>
<div class="a" style="left:6px;top:392px;width:32px;height:32px;background:#000;"></div>
<svg class="a" style="left:6px;top:119px" width="32" height="32" viewBox="0 0 32 32"><path d="M10 5.5L27.5 4L29 8L29 22.5L25.5 28L7 26.5L4.5 9Z" fill="#E6E2D2"/><path d="M5 9.5L23.5 9.5L24 27L7.5 26.5Z" fill="#ABA796"/><path d="M5 9.5L8 9.5L9.5 26.5L7.5 26.5Z" fill="#C4C0B0"/></svg>
<svg class="a" style="left:6px;top:158px" width="32" height="32" viewBox="0 0 32 32"><path d="M11 4L19 3.5L21 5L21 28L13 28L10 26L10 5Z" fill="#E6E2D2"/><path d="M10 5.5L13.5 6L13.5 28L10 26Z" fill="#ABA796"/></svg>
<svg class="a" style="left:6px;top:197px" width="32" height="32" viewBox="0 0 32 32"><ellipse cx="16.2" cy="17" rx="13.2" ry="10.6" fill="#E6E2D2"/></svg>
<svg class="a" style="left:6px;top:236px" width="32" height="32" viewBox="0 0 32 32"><rect x="1.6" y="10" width="28.2" height="12" rx="7" ry="6" fill="#E6E2D2"/></svg>
<svg class="a" style="left:6px;top:275px" width="32" height="32" viewBox="0 0 32 32"><path d="M15.5 7.9L0.7 20.6L29.8 20.6Z" fill="#E6E2D2"/></svg>
<svg class="a" style="left:6px;top:314px" width="32" height="32" viewBox="0 0 32 32"><defs><radialGradient id="s1" cx="0.68" cy="0.32" r="0.75"><stop offset="0" stop-color="#F4F2E8"/><stop offset="0.35" stop-color="#E0DCCC"/><stop offset="0.7" stop-color="#B8B4A2"/><stop offset="1" stop-color="#A29E8C"/></radialGradient></defs><circle cx="15.6" cy="15.6" r="12.4" fill="url(#s1)"/><path d="M5.5 9.5Q3.5 15 6 20Q9 25 17 27" fill="none" stroke="#000" stroke-width="2.2" stroke-dasharray="2.2 1.3"/><path d="M7.5 12Q7 17 10 21" fill="none" stroke="#000" stroke-width="1.2" stroke-dasharray="1.5 2"/></svg>
<svg class="a" style="left:6px;top:353px" width="32" height="32" viewBox="0 0 32 32"><defs><radialGradient id="s2" cx="0.62" cy="0.3" r="0.7"><stop offset="0" stop-color="#FFFFF8"/><stop offset="0.4" stop-color="#E6E2D6"/><stop offset="0.75" stop-color="#BAB6A6"/><stop offset="1" stop-color="#9E9A8A"/></radialGradient></defs><circle cx="16" cy="17.5" r="13" fill="url(#s2)"/><path d="M6 9Q2.5 15 5 22Q8 27 14 29.5" fill="none" stroke="#000" stroke-width="2.4" stroke-dasharray="2.4 1.2"/><path d="M8 12Q6.5 18 9.5 23Q12 26 16 27" fill="none" stroke="#000" stroke-width="1.3" stroke-dasharray="1.6 1.6"/></svg>
<svg class="a" style="left:6px;top:392px" width="32" height="32" viewBox="0 0 32 32"><path d="M16 6L24 10L29.5 15.5L28 19.5L21 24L11.2 24.8L5.5 21L3.8 16L5.5 12.5Z" fill="#E6E2D2"/><path d="M16 6L5.5 12.5L3.8 16L5.5 21L11.2 24.8L18.5 24.5Z" fill="#BAB6A6"/><path d="M6.5 15L12 10" stroke="#000" stroke-width="1.2"/></svg>
<div class="a" style="left:669px;top:40px;width:353px;height:68px;background:#7A96DF;border-radius:7px 7px 0 0;border:1px solid #6A86D0"></div>
<div class="a" style="left:670px;top:41px;width:351px;height:27px;border-radius:6px 6px 0 0;background:linear-gradient(#9DB4EE 0%,#8BA6EA 15%,#7B99E3 40%,#7D9BE6 80%,#86A3EB 100%)"></div>
<div class="a t" style="left:675px;top:46px;font-size:13px;font-weight:bold;color:#D8E4F8;line-height:18px">Solid View Controls</div>
<div class="a" style="left:997px;top:45px;width:20px;height:20px;border:1px solid #E8C8D0;border-radius:3px;background:#B8707E"></div>
<svg class="a" style="left:997px;top:45px" width="20" height="20"><path d="M5.5 5.5L14.5 14.5M14.5 5.5L5.5 14.5" stroke="#fff" stroke-width="2"/></svg>
<div class="a" style="left:672px;top:68px;width:346px;height:37px;background:#ECE9D8;"></div>
<div class="a t" style="left:687px;top:69px;line-height:12px">Zoom</div>
<div class="a t" style="left:687px;top:87px;line-height:12px">Key Light</div>
<div class="a t" style="left:801px;top:87px;line-height:12px">Fill Light</div>
<div class="a t" style="left:900px;top:87px;line-height:12px">Back Light</div>
<div class="a" style="left:730px;top:72px;width:272px;height:2px;background:#7A7664;"></div>
<div class="a" style="left:730px;top:74px;width:272px;height:1px;background:#fff;"></div>
<div class="a" style="left:980px;top:69px;width:5px;height:10px;background:#ECE9D8;border-top:1px solid #fff;border-left:1px solid #fff;border-right:1px solid #716F64;border-bottom:1px solid #716F64"></div>
<div class="a" style="left:739px;top:92px;width:43px;height:2px;background:#7A7664;"></div>
<div class="a" style="left:739px;top:94px;width:43px;height:1px;background:#fff;"></div>
<div class="a" style="left:777px;top:89px;width:5px;height:10px;background:#ECE9D8;border-top:1px solid #fff;border-left:1px solid #fff;border-right:1px solid #716F64;border-bottom:1px solid #716F64"></div>
<div class="a" style="left:845px;top:92px;width:43px;height:2px;background:#7A7664;"></div>
<div class="a" style="left:845px;top:94px;width:43px;height:1px;background:#fff;"></div>
<div class="a" style="left:857px;top:89px;width:5px;height:10px;background:#ECE9D8;border-top:1px solid #fff;border-left:1px solid #fff;border-right:1px solid #716F64;border-bottom:1px solid #716F64"></div>
<div class="a" style="left:959px;top:92px;width:44px;height:2px;background:#7A7664;"></div>
<div class="a" style="left:959px;top:94px;width:44px;height:1px;background:#fff;"></div>
<div class="a" style="left:998px;top:89px;width:5px;height:10px;background:#ECE9D8;border-top:1px solid #fff;border-left:1px solid #fff;border-right:1px solid #716F64;border-bottom:1px solid #716F64"></div>
<div class="a" style="left:0px;top:714px;width:1024px;height:2px;background:#fff;"></div>
<div class="a t" style="left:2px;top:720px;line-height:12px">Ready</div>
<div class="a t" style="left:407px;top:718px;width:175px;height:16px;border-top:1px solid #ACA899;border-left:1px solid #ACA899;border-right:1px solid #fff;border-bottom:1px solid #fff;padding-left:1px;line-height:13px"></div>
<div class="a t" style="left:584px;top:718px;width:261px;height:16px;border-top:1px solid #ACA899;border-left:1px solid #ACA899;border-right:1px solid #fff;border-bottom:1px solid #fff;padding-left:1px;line-height:13px">Object:2000:Cam.2</div>
<div class="a t" style="left:847px;top:718px;width:178px;height:16px;border-top:1px solid #ACA899;border-left:1px solid #ACA899;border-right:1px solid #fff;border-bottom:1px solid #fff;padding-left:1px;line-height:13px"><span style="letter-spacing:-0.4px">TrainSim Modeler Pro</span></div>
<div class="a" style="left:0px;top:734px;width:1024px;height:4px;background:#3A80EA;"></div>
<div class="a" style="left:0px;top:734px;width:1024px;height:1px;background:#2A66D0;"></div>
</body></html>
